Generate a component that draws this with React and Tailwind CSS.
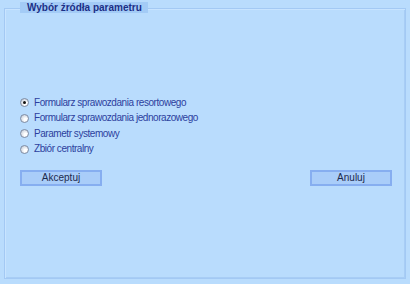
import React from "react";

const FONT = { fontFamily: "'Liberation Sans', Arial, sans-serif" };

function Radio({ checked, label }) {
  return (
    <div className="flex items-center h-[15.5px]">
      <div className="w-[9px] h-[9px] rounded-full border border-[#7f8ca3] bg-[radial-gradient(circle_at_65%_65%,#ffffff_20%,#b8c2d0)] flex items-center justify-center">
        {checked && <div className="w-[3px] h-[3px] rounded-full bg-[#111111]" />}
      </div>
      <span className="ml-[5px] text-[#2c3f9e] text-[10px] tracking-[-0.45px] leading-none whitespace-nowrap" style={FONT}>
        {label}
      </span>
    </div>
  );
}

function Btn({ children }) {
  return (
    <div className="w-[82px] h-[16px] border-2 border-[#86aef0] bg-[#a9cdf9] flex items-center justify-center text-[10px] text-[#1d2a4d] leading-none" style={FONT}>
      {children}
    </div>
  );
}

export default function App() {
  return (
    <div className="w-[410px] h-[284px] bg-[#b9dcfd] pt-[8px] pl-[4px] overflow-hidden">
      <div className="relative w-[402px] h-[271px] border border-[#a3c9f4] shadow-[inset_1px_1px_0_#c8e4ff,inset_-1px_-1px_0_#a8cdf5]">
        <div className="absolute left-[15px] top-[-7px] h-[11px] w-[128px] bg-[#a3cbf6] flex items-center pl-[7px] text-[10px] font-bold text-[#1b2f86] leading-none whitespace-nowrap" style={FONT}>
          Wybór źródła parametru
        </div>
        <div className="pt-[86px] pl-[15px] flex flex-col">
          <Radio checked label="Formularz sprawozdania resortowego" />
          <Radio label="Formularz sprawozdania jednorazowego" />
          <Radio label="Parametr systemowy" />
          <Radio label="Zbiór centralny" />
        </div>
        <div className="mt-[13px] pl-[15px] pr-[13px] flex justify-between">
          <Btn>Akceptuj</Btn>
          <Btn>Anuluj</Btn>
        </div>
      </div>
    </div>
  );
}
